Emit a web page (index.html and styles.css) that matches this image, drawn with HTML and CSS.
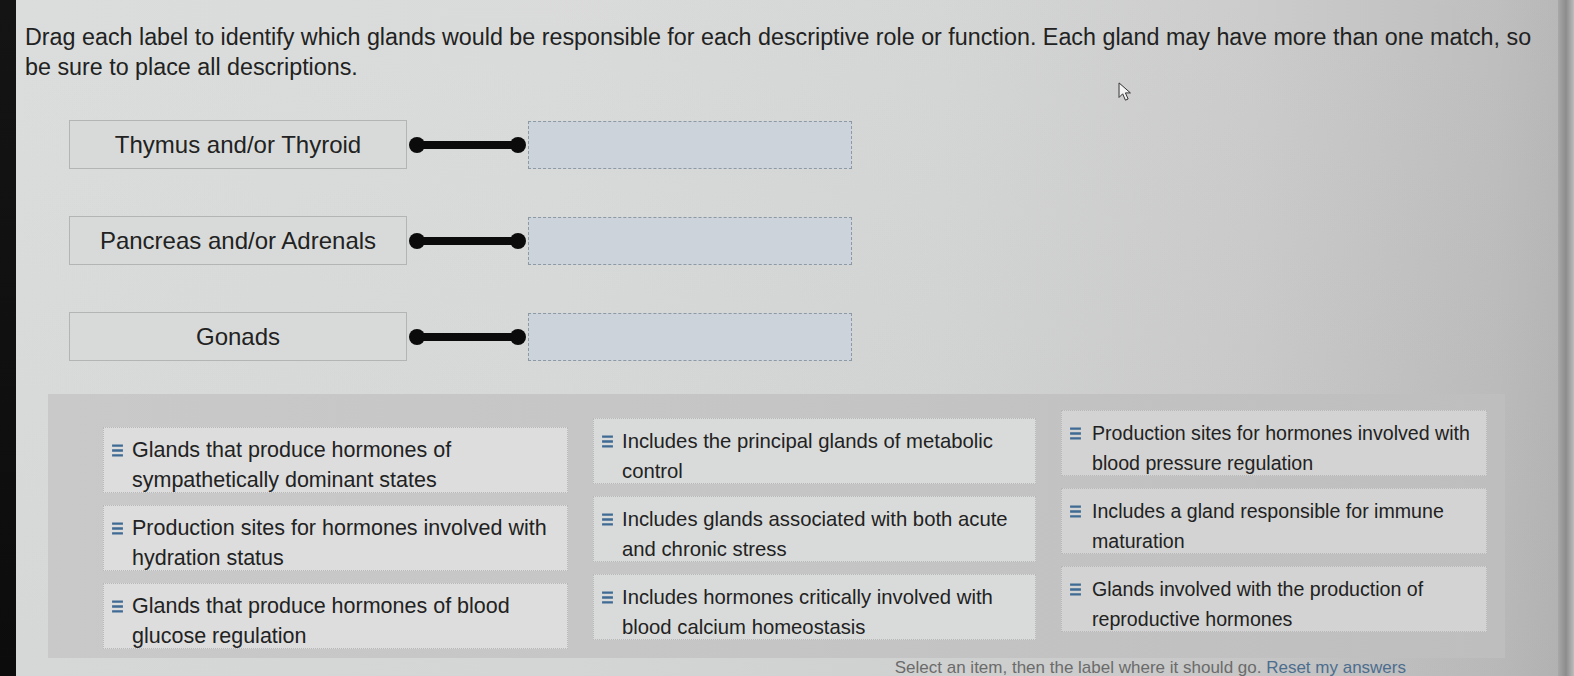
FILE: index.html
```html
<!DOCTYPE html>
<html>
<head>
<meta charset="utf-8">
<link rel="stylesheet" href="styles.css">
</head>
<body>
<div class="page">
  <div class="bezel"></div>
  <main class="content">
    <p class="prompt">Drag each label to identify which glands would be responsible for each descriptive role or function. Each gland may have more than one match, so<br>be sure to place all descriptions.</p>

    <section class="targets">
      <div class="row">
        <div class="label">Thymus and/or Thyroid</div>
        <div class="link"><span class="dot"></span><span class="bar"></span><span class="dot"></span></div>
        <div class="drop"></div>
      </div>
      <div class="row">
        <div class="label">Pancreas and/or Adrenals</div>
        <div class="link"><span class="dot"></span><span class="bar"></span><span class="dot"></span></div>
        <div class="drop"></div>
      </div>
      <div class="row">
        <div class="label">Gonads</div>
        <div class="link"><span class="dot"></span><span class="bar"></span><span class="dot"></span></div>
        <div class="drop"></div>
      </div>
    </section>

    <section class="bank">
      <div class="card c1"><svg class="grip" viewBox="0 0 12 12"><path d="M1 1.5h10M1 6h10M1 10.5h10"/></svg><span>Glands that produce hormones of<br>sympathetically dominant states</span></div>
      <div class="card c2"><svg class="grip" viewBox="0 0 12 12"><path d="M1 1.5h10M1 6h10M1 10.5h10"/></svg><span>Includes the principal glands of metabolic<br>control</span></div>
      <div class="card c3"><svg class="grip" viewBox="0 0 12 12"><path d="M1 1.5h10M1 6h10M1 10.5h10"/></svg><span>Production sites for hormones involved with<br>blood pressure regulation</span></div>

      <div class="card c1"><svg class="grip" viewBox="0 0 12 12"><path d="M1 1.5h10M1 6h10M1 10.5h10"/></svg><span>Production sites for hormones involved with<br>hydration status</span></div>
      <div class="card c2"><svg class="grip" viewBox="0 0 12 12"><path d="M1 1.5h10M1 6h10M1 10.5h10"/></svg><span>Includes glands associated with both acute<br>and chronic stress</span></div>
      <div class="card c3"><svg class="grip" viewBox="0 0 12 12"><path d="M1 1.5h10M1 6h10M1 10.5h10"/></svg><span>Includes a gland responsible for immune<br>maturation</span></div>

      <div class="card c1"><svg class="grip" viewBox="0 0 12 12"><path d="M1 1.5h10M1 6h10M1 10.5h10"/></svg><span>Glands that produce hormones of blood<br>glucose regulation</span></div>
      <div class="card c2"><svg class="grip" viewBox="0 0 12 12"><path d="M1 1.5h10M1 6h10M1 10.5h10"/></svg><span>Includes hormones critically involved with<br>blood calcium homeostasis</span></div>
      <div class="card c3"><svg class="grip" viewBox="0 0 12 12"><path d="M1 1.5h10M1 6h10M1 10.5h10"/></svg><span>Glands involved with the production of<br>reproductive hormones</span></div>
    </section>

    <p class="footer"><span class="hint">Select an item, then the label where it should go.</span> <a class="reset">Reset my answers</a></p>

    <svg class="cursor" viewBox="0 0 14 22" width="13" height="20"><path d="M1 1v16l4-4 3 7 3-1.3-3-6.7h5.5z" fill="#f4f4f4" stroke="#333" stroke-width="1.1" stroke-linejoin="round"/></svg>
  </main>
  <div class="edge"></div>
</div>
</body>
</html>
```

FILE: styles.css
```css
* { box-sizing: border-box; }

html, body {
  margin: 0;
  height: 676px;
  overflow: hidden;
}

body {
  font-family: "Liberation Sans", Arial, sans-serif;
  color: #1f1f1f;
  background: #111;
}

.page {
  display: flex;
  height: 676px;
}

.bezel {
  width: 16px;
  background: linear-gradient(to bottom, #141414, #0c0c0c);
  flex: none;
}

.edge {
  width: 16px;
  flex: none;
  background: linear-gradient(to right, #a8a8a8, #8c8c8c 50%, #bdbdbd);
}

.content {
  position: relative;
  flex: 1;
  padding-left: 9px;
  background:
    linear-gradient(to bottom, rgba(255,255,255,0.04), rgba(0,0,0,0.02)),
    linear-gradient(to right, #dadcdb 0%, #d8dad9 35%, #d3d5d4 60%, #c9cac9 80%, #bcbcbc 96%, #b5b5b5 100%);
}

.prompt {
  margin: 0;
  padding-top: 22px;
  font-size: 23.3px;
  line-height: 30px;
  white-space: nowrap;
  color: #222;
}

.targets {
  margin-top: 38px;
  margin-left: 44px;
  display: flex;
  flex-direction: column;
  gap: 47px;
}

.row {
  display: flex;
  align-items: center;
  height: 49px;
}

.label {
  width: 338px;
  height: 49px;
  display: flex;
  align-items: center;
  justify-content: center;
  font-size: 24px;
  color: #222;
  background: #d8dad9;
  border: 1px solid #b3b5b4;
}

.link {
  width: 121px;
  display: flex;
  align-items: center;
  padding: 0 2px 0 2px;
}

.dot {
  width: 16px;
  height: 16px;
  border-radius: 50%;
  background: #0b0b0b;
  flex: none;
}

.bar {
  flex: 1;
  height: 8px;
  margin: 0 -3px;
  background: #0b0b0b;
}

.drop {
  width: 324px;
  height: 48px;
  background: #cdd3da;
  border: 1px dashed #8d99a4;
}

.bank {
  margin: 33px 53px 0 23px;
  padding: 33px 0 9px 55px;
  height: 264px;
  display: grid;
  grid-template-columns: 465px 443px 426px;
  grid-auto-rows: 66px;
  column-gap: 25px;
  row-gap: 12px;
  background: linear-gradient(to right, #c8c9c8, #c4c5c4 50%, #bdbebd);
}

.card {
  display: flex;
  align-items: flex-start;
  padding: 7px 8px 0 7px;
  line-height: 30px;
  color: #222;
  background: #dcdddc;
  border: 1px dotted #b7b8b7;
  white-space: nowrap;
}

.card.c1 { font-size: 21.5px; }
.card.c2 { font-size: 20.3px; background: #d9dbdb; margin: -9px 0 9px; }
.card.c3 { font-size: 19.6px; background: #d2d3d2; margin: -17px 0 17px; }

.grip {
  width: 13px;
  height: 13px;
  margin-top: 9px;
  margin-right: 8px;
  flex: none;
  fill: none;
  stroke: #3f6a93;
  stroke-width: 2.2;
}

.card.c3 .grip { margin-right: 10px; }

.footer {
  margin: 0;
  padding-top: 1px;
  padding-right: 152px;
  text-align: right;
  font-size: 17px;
  line-height: 18px;
  white-space: nowrap;
  color: #555;
}

.hint { color: #6b6b6b; }

.reset {
  color: #4d6d8e;
}

.cursor {
  position: absolute;
  left: 1102px;
  top: 82px;
}
```
